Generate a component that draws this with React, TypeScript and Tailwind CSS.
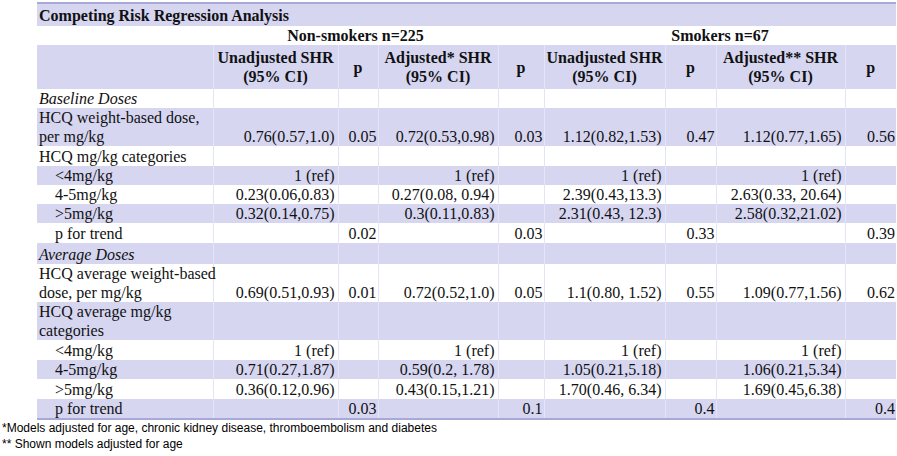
import { Fragment } from 'react'
import clsx from 'clsx'

type Row = {
  label: React.ReactNode
  kind?: 'section' | 'item' | 'sub'
  vals?: string[]
  shaded: boolean
  h: string
}

const widths = [176, 125, 40, 120, 46, 121, 51, 129, 51]

const rows: Row[] = [
  { label: 'Baseline Doses', kind: 'section', shaded: false, h: 'h-[19px]' },
  {
    label: (
      <>
        HCQ weight-based dose,
        <br />
        per mg/kg
      </>
    ),
    vals: ['0.76(0.57,1.0)', '0.05', '0.72(0.53,0.98)', '0.03', '1.12(0.82,1.53)', '0.47', '1.12(0.77,1.65)', '0.56'],
    shaded: true,
    h: 'h-[38px]',
  },
  { label: 'HCQ mg/kg categories', shaded: false, h: 'h-[20px]' },
  { label: '<4mg/kg', kind: 'sub', vals: ['1 (ref)', '', '1 (ref)', '', '1 (ref)', '', '1 (ref)', ''], shaded: true, h: 'h-[19px]' },
  {
    label: '4-5mg/kg',
    kind: 'sub',
    vals: ['0.23(0.06,0.83)', '', '0.27(0.08, 0.94)', '', '2.39(0.43,13.3)', '', '2.63(0.33, 20.64)', ''],
    shaded: false,
    h: 'h-[19px]',
  },
  {
    label: '>5mg/kg',
    kind: 'sub',
    vals: ['0.32(0.14,0.75)', '', '0.3(0.11,0.83)', '', '2.31(0.43, 12.3)', '', '2.58(0.32,21.02)', ''],
    shaded: true,
    h: 'h-[19px]',
  },
  { label: 'p for trend', kind: 'sub', vals: ['', '0.02', '', '0.03', '', '0.33', '', '0.39'], shaded: false, h: 'h-[20px]' },
  { label: 'Average Doses', kind: 'section', shaded: true, h: 'h-[21px]' },
  {
    label: (
      <>
        HCQ average weight-based
        <br />
        dose, per mg/kg
      </>
    ),
    vals: ['0.69(0.51,0.93)', '0.01', '0.72(0.52,1.0)', '0.05', '1.1(0.80, 1.52)', '0.55', '1.09(0.77,1.56)', '0.62'],
    shaded: false,
    h: 'h-[38px]',
  },
  {
    label: (
      <>
        HCQ average mg/kg
        <br />
        categories
      </>
    ),
    shaded: true,
    h: 'h-[38px]',
  },
  { label: '<4mg/kg', kind: 'sub', vals: ['1 (ref)', '', '1 (ref)', '', '1 (ref)', '', '1 (ref)', ''], shaded: false, h: 'h-[20px]' },
  {
    label: '4-5mg/kg',
    kind: 'sub',
    vals: ['0.71(0.27,1.87)', '', '0.59(0.2, 1.78)', '', '1.05(0.21,5.18)', '', '1.06(0.21,5.34)', ''],
    shaded: true,
    h: 'h-[19px]',
  },
  {
    label: '>5mg/kg',
    kind: 'sub',
    vals: ['0.36(0.12,0.96)', '', '0.43(0.15,1.21)', '', '1.70(0.46, 6.34)', '', '1.69(0.45,6.38)', ''],
    shaded: false,
    h: 'h-[20px]',
  },
  { label: 'p for trend', kind: 'sub', vals: ['', '0.03', '', '0.1', '', '0.4', '', '0.4'], shaded: true, h: 'h-[19px]' },
]

const cell = 'border-l border-[#e4e4f6] p-0 first:border-l-0'

export default function App() {
  return (
    <div className="min-h-[456px] w-[897px] bg-white">
      <div className="pl-[37px] pt-[2px]">
        <table
          className="w-[859px] table-fixed border-collapse text-[16px] leading-[19px] text-[#111]"
          style={{ fontFamily: '"Liberation Serif", "Times New Roman", serif' }}
        >
          <colgroup>
            {widths.map((w, i) => (
              <col key={i} style={{ width: w }} />
            ))}
          </colgroup>
          <tbody>
            <tr className="h-[23px] border-t-2 border-[#a9a9d8] bg-[#d6d6f1]">
              <td colSpan={9} className="p-0 pl-[2px] align-middle font-bold">
                Competing Risk Regression Analysis
              </td>
            </tr>
            <tr className="h-[19px] bg-white font-bold">
              <td className="p-0" />
              <td colSpan={3} className="p-0 text-center">
                Non-smokers n=225
              </td>
              <td className="p-0" />
              <td colSpan={4} className="p-0 text-center">
                Smokers n=67
              </td>
            </tr>
            <tr className="h-[44px] bg-[#d6d6f1] text-center font-bold">
              <td className={cell} />
              <td className={clsx(cell, 'align-middle')}>
                Unadjusted SHR
                <br />
                (95% CI)
              </td>
              <td className={cell}>p</td>
              <td className={cell}>
                Adjusted* SHR
                <br />
                (95% CI)
              </td>
              <td className={cell}>p</td>
              <td className={cell}>
                Unadjusted SHR
                <br />
                (95% CI)
              </td>
              <td className={cell}>p</td>
              <td className={cell}>
                Adjusted** SHR
                <br />
                (95% CI)
              </td>
              <td className={cell}>p</td>
            </tr>
            {rows.map((r, i) => (
              <Fragment key={i}>
                <tr className={clsx(r.h, r.shaded ? 'bg-[#d6d6f1]' : 'bg-white', i === rows.length - 1 && 'border-b-2 border-[#a9a9d8]')}>
                  <td
                    className={clsx(
                      cell,
                      'whitespace-nowrap align-bottom',
                      r.kind === 'section' && 'pl-[2px] italic',
                      r.kind === 'sub' && 'pl-[18px]',
                      !r.kind && 'pl-[2px]',
                    )}
                  >
                    {r.label}
                  </td>
                  {(r.vals ?? ['', '', '', '', '', '', '', '']).map((v, j) => (
                    <td
                      key={j}
                      className={clsx(cell, 'whitespace-nowrap text-right align-bottom', j % 2 === 0 ? 'pr-[3px]' : 'pr-[1px]')}
                    >
                      {v}
                    </td>
                  ))}
                </tr>
              </Fragment>
            ))}
          </tbody>
        </table>
      </div>
      <div
        className="pl-[2px] text-[12px] leading-[16px] text-black"
        style={{ fontFamily: '"Liberation Sans", Arial, sans-serif' }}
      >
        <p>*Models adjusted for age, chronic kidney disease, thromboembolism and diabetes</p>
        <p>** Shown models adjusted for age</p>
      </div>
    </div>
  )
}
